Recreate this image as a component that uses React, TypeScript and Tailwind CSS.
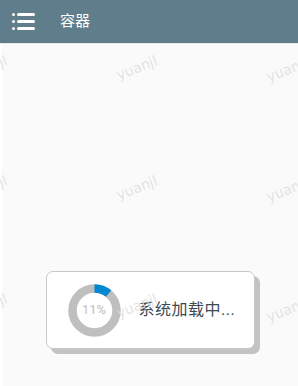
import React from 'react';

const marks = [
  { x: -13, y: 68 }, { x: 137, y: 68 }, { x: 287, y: 70 },
  { x: -13, y: 188 }, { x: 137, y: 188 }, { x: 287, y: 190 },
  { x: -13, y: 306 }, { x: 137, y: 306 }, { x: 287, y: 310 },
];

function Ring({ percent }: { percent: number }) {
  const r = 22;
  const c = 2 * Math.PI * r;
  return (
    <div className="relative w-[53px] h-[53px] shrink-0">
      <svg width="53" height="53" viewBox="0 0 53 53" className="-rotate-90">
        <circle cx="26.5" cy="26.5" r={r} fill="none" stroke="#bfbfbf" strokeWidth="8.5" />
        <circle
          cx="26.5"
          cy="26.5"
          r={r}
          fill="none"
          stroke="#0288d1"
          strokeWidth="8.5"
          strokeDasharray={`${(c * percent) / 100} ${c}`}
        />
      </svg>
      <span className="absolute inset-0 flex items-center justify-center text-[13px] text-[#c0c0c0]">
        {percent}%
      </span>
    </div>
  );
}

export default function App() {
  return (
    <div
      className="relative w-[298px] h-[386px] overflow-hidden bg-[#fafafa] flex flex-col"
      style={{ fontFamily: 'Roboto, "Noto Sans CJK SC", sans-serif' }}
    >
      <header className="h-[44px] bg-[#607d8b] flex items-center border-b border-[#e1e7ea] shrink-0">
        <div className="ml-[12px] w-[23px] flex flex-col gap-[4px]">
          {[0, 1, 2].map((i) => (
            <div key={i} className="flex items-center gap-[2px]">
              <span className="w-[3px] h-[3px] rounded-full bg-white" />
              <span className="flex-1 h-[3px] rounded-full bg-white" />
            </div>
          ))}
        </div>
        <span className="ml-[25px] text-[15px] text-white">容器</span>
      </header>

      <main className="flex-1 border-l-2 border-white flex flex-col items-center pt-[227px]">
        <div className="w-[209px] h-[78px] bg-white border border-[#c8c8c8] rounded-[7px] shadow-[5px_5px_0_#c3c3c3] flex items-center pl-[21px] gap-[18px]">
          <Ring percent={11} />
          <span className="text-[16px] text-[#3c4a52] tracking-[0.5px]">系统加载中...</span>
        </div>
      </main>

      <div className="absolute inset-0 pointer-events-none">
        {marks.map((m, i) => (
          <span
            key={i}
            className="absolute text-[14px] text-[#dcdcdc]/80 -rotate-[22deg] -translate-x-1/2 -translate-y-1/2"
            style={{ left: m.x, top: m.y, fontFamily: '"DejaVu Sans", sans-serif' }}
          >
            yuanjl
          </span>
        ))}
      </div>
    </div>
  );
}
